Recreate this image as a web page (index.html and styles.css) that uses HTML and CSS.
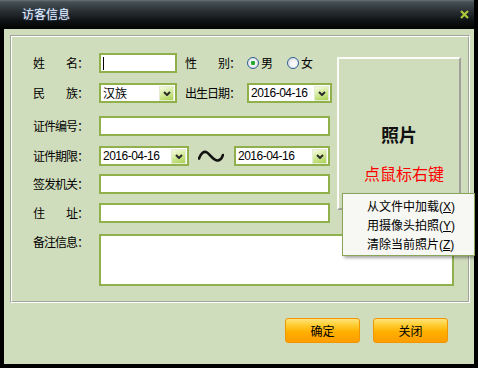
FILE: index.html
```html
<!DOCTYPE html>
<html lang="zh">
<head>
<meta charset="utf-8">
<title>访客信息</title>
<link rel="stylesheet" href="styles.css">
</head>
<body>
<div class="window">
  <div class="titlebar">
    <span class="title">访客信息</span>
    <svg class="close" width="9" height="9" viewBox="0 0 9 9"><path d="M1 1 L8 8 M8 1 L1 8" stroke="#a9c83a" stroke-width="2.2" fill="none"/></svg>
  </div>
  <div class="client">
    <div class="group"><div class="group-in">
      <div class="top">
        <div class="form">
          <div class="row">
            <span class="lbl spread"><span>姓</span><span>名：</span></span>
            <div class="field w78"><span class="caret"></span></div>
            <span class="lbl lbl2 spread"><span>性</span><span>别：</span></span>
            <span class="radio"><span class="dot on"></span>男</span>
            <span class="radio r-second"><span class="dot"></span>女</span>
          </div>
          <div class="row r2">
            <span class="lbl spread"><span>民</span><span>族：</span></span>
            <div class="field select w78"><span class="val">汉族</span><span class="dd"><svg width="8" height="5" viewBox="0 0 8 5"><path d="M1 1 L4 4 L7 1" stroke="#2a2a2a" stroke-width="2" fill="none"/></svg></span></div>
            <span class="lbl lbl2">出生日期：</span>
            <div class="field select w85"><span class="val date">2016-04-16</span><span class="dd"><svg width="8" height="5" viewBox="0 0 8 5"><path d="M1 1 L4 4 L7 1" stroke="#2a2a2a" stroke-width="2" fill="none"/></svg></span></div>
          </div>
          <div class="row r3">
            <span class="lbl">证件编号：</span>
            <div class="field w231"></div>
          </div>
          <div class="row r4">
            <span class="lbl">证件期限：</span>
            <div class="field select w90"><span class="val date">2016-04-16</span><span class="dd"><svg width="8" height="5" viewBox="0 0 8 5"><path d="M1 1 L4 4 L7 1" stroke="#2a2a2a" stroke-width="2" fill="none"/></svg></span></div>
            <svg class="tilde" width="26" height="14" viewBox="0 0 26 14"><path d="M1 9.5 C3 4 6 1.5 9 3.5 C12 5.5 15 11 19 11.5 C22 11.8 24 9 25 6" stroke="#111" stroke-width="2.6" fill="none" stroke-linecap="round"/></svg>
            <div class="field select w96"><span class="val date">2016-04-16</span><span class="dd"><svg width="8" height="5" viewBox="0 0 8 5"><path d="M1 1 L4 4 L7 1" stroke="#2a2a2a" stroke-width="2" fill="none"/></svg></span></div>
          </div>
          <div class="row r5">
            <span class="lbl">签发机关：</span>
            <div class="field w231"></div>
          </div>
          <div class="row r6">
            <span class="lbl spread"><span>住</span><span>址：</span></span>
            <div class="field w231"></div>
          </div>
        </div>
        <div class="photo">
          <div class="ph-title">照片</div>
          <div class="ph-hint">点鼠标右键</div>
        </div>
      </div>
      <div class="row r7">
        <span class="lbl">备注信息：</span>
        <div class="field memo"></div>
      </div>
    </div></div>
    <div class="buttons">
      <div class="btn">确定</div>
      <div class="btn">关闭</div>
    </div>
  </div>
  <div class="menu">
    <div class="item">从文件中加载<span class="lat">(<u>X</u>)</span></div>
    <div class="item">用摄像头拍照<span class="lat">(<u>Y</u>)</span></div>
    <div class="item">清除当前照片<span class="lat">(<u>Z</u>)</span></div>
  </div>
</div>
</body>
</html>
```

FILE: styles.css
```css
html, body {
  margin: 0;
  padding: 0;
  background: #000;
}
body {
  font-family: "Noto Sans CJK SC", "Liberation Sans", sans-serif;
  font-size: 12px;
  color: #000;
}
.window {
  position: relative;
  width: 478px;
  height: 368px;
  background: #000;
  overflow: hidden;
}
.titlebar {
  width: 474px;
  height: 29px;
  box-sizing: border-box;
  padding: 0 5px 1px 22px;
  display: flex;
  align-items: center;
  justify-content: space-between;
  background: linear-gradient(#6a7276 0, #465054 2px, #262d31 12px, #0c0f11 22px, #020303 100%);
}
.title {
  color: #e8f0ff;
  font-size: 12px;
  line-height: 14px;
  text-shadow: 0 0 2px rgba(120, 170, 255, 0.6);
}
.close {
  display: block;
}
.client {
  margin-left: 4px;
  width: 470px;
  height: 335px;
  box-sizing: border-box;
  padding: 6px 0 0 6px;
  background: #d0ddbd;
}
.group {
  width: 460px;
  height: 268px;
  box-sizing: border-box;
  border: 1px solid;
  border-color: #a2a59c #fff #fff #a2a59c;
}
.group-in {
  height: 100%;
  box-sizing: border-box;
  border: 1px solid;
  border-color: #fff #a2a59c #a2a59c #fff;
}
.top {
  display: flex;
  align-items: flex-start;
}
.form {
  width: 325px;
  flex: none;
  box-sizing: border-box;
  padding: 16px 0 0 21px;
}
.row {
  display: flex;
  align-items: center;
  height: 20px;
}
.r2 { margin-top: 10px; }
.r3 { margin-top: 13px; }
.r4 { margin-top: 10px; }
.r5 { margin-top: 8px; }
.r6 { margin-top: 9px; }
.r7 {
  margin-top: 11px;
  padding-left: 21px;
  height: auto;
  align-items: flex-start;
}
.r7 .lbl {
  line-height: 16px;
}
.lbl {
  width: 55px;
  flex: none;
  margin-right: 11px;
  letter-spacing: -1px;
  white-space: nowrap;
  line-height: 16px;
}
.spread {
  display: flex;
  justify-content: space-between;
}
.lbl2 {
  margin-left: 8px;
  margin-right: 7px;
}
.field {
  flex: none;
  height: 20px;
  box-sizing: border-box;
  border: 2px solid #8fb04a;
  background: #fff;
  display: flex;
  align-items: center;
}
.w78 { width: 78px; }
.w85 { width: 85px; }
.w90 { width: 90px; }
.w96 { width: 96px; }
.w231 { width: 231px; }
.memo {
  width: 355px;
  height: 52px;
}
.caret {
  width: 1px;
  height: 13px;
  margin-left: 2px;
  background: #000;
}
.select .val {
  padding-left: 2px;
  line-height: 16px;
  white-space: nowrap;
}
.date {
  font-family: "Liberation Sans", sans-serif;
  letter-spacing: -0.5px;
  font-size: 12px;
}
.dd {
  margin-left: auto;
  margin-right: 1px;
  width: 15px;
  height: 15px;
  box-sizing: border-box;
  border: 1px solid #e4ecd4;
  background: linear-gradient(160deg, #f6fbe2 0, #d6eca0 45%, #a9d152 100%);
  display: flex;
  align-items: center;
  justify-content: center;
}
.dd svg {
  display: block;
}
.radio {
  display: flex;
  align-items: center;
  gap: 2px;
  line-height: 16px;
}
.r-second {
  margin-left: 14px;
}
.dot {
  width: 12px;
  height: 12px;
  box-sizing: border-box;
  border: 1px solid #2f5e95;
  border-radius: 50%;
  background: radial-gradient(circle at 60% 60%, #ffffff 0, #f0f2f4 40%, #c8ccd2 100%);
}
.dot.on {
  background: radial-gradient(circle, #1f9a2a 0, #2fb03a 2px, #ffffff 2.6px, #eef0f2 45%, #c8ccd2 100%);
}
.tilde {
  flex: none;
  margin: 0 10px 0 9px;
  display: block;
}
.photo {
  flex: none;
  margin-top: 20px;
  width: 124px;
  height: 153px;
  box-sizing: border-box;
  border: 2px solid;
  border-color: #fbfbf8 #a0a29a #a0a29a #fbfbf8;
  display: flex;
  flex-direction: column;
  align-items: center;
}
.ph-title {
  margin-top: 63px;
  font-size: 18px;
  line-height: 24px;
  font-weight: bold;
  color: #111;
}
.ph-hint {
  margin-top: 17px;
  font-size: 16px;
  line-height: 20px;
  color: #ff0000;
  padding-left: 10px;
}
.buttons {
  display: flex;
  justify-content: flex-end;
  gap: 13px;
  padding-right: 26px;
  margin-top: 15px;
}
.btn {
  width: 75px;
  height: 25px;
  box-sizing: border-box;
  border: 1px solid #f29600;
  border-radius: 3px;
  background: linear-gradient(#ffe27c 0, #ffcf35 25%, #ffb000 55%, #ff9d00 100%);
  display: flex;
  align-items: center;
  justify-content: center;
  font-size: 12px;
  line-height: 16px;
}
.menu {
  position: absolute;
  left: 342px;
  top: 193px;
  width: 133px;
  box-sizing: border-box;
  padding: 2px 0;
  background: #f7f7f3;
  border: 1px solid #8aa45a;
  box-shadow: 2px 2px 3px rgba(0, 0, 0, 0.35);
}
.item {
  height: 19px;
  line-height: 19px;
  padding-left: 24px;
  white-space: nowrap;
  font-size: 12px;
}
.lat {
  font-family: "Liberation Sans", sans-serif;
}
```
